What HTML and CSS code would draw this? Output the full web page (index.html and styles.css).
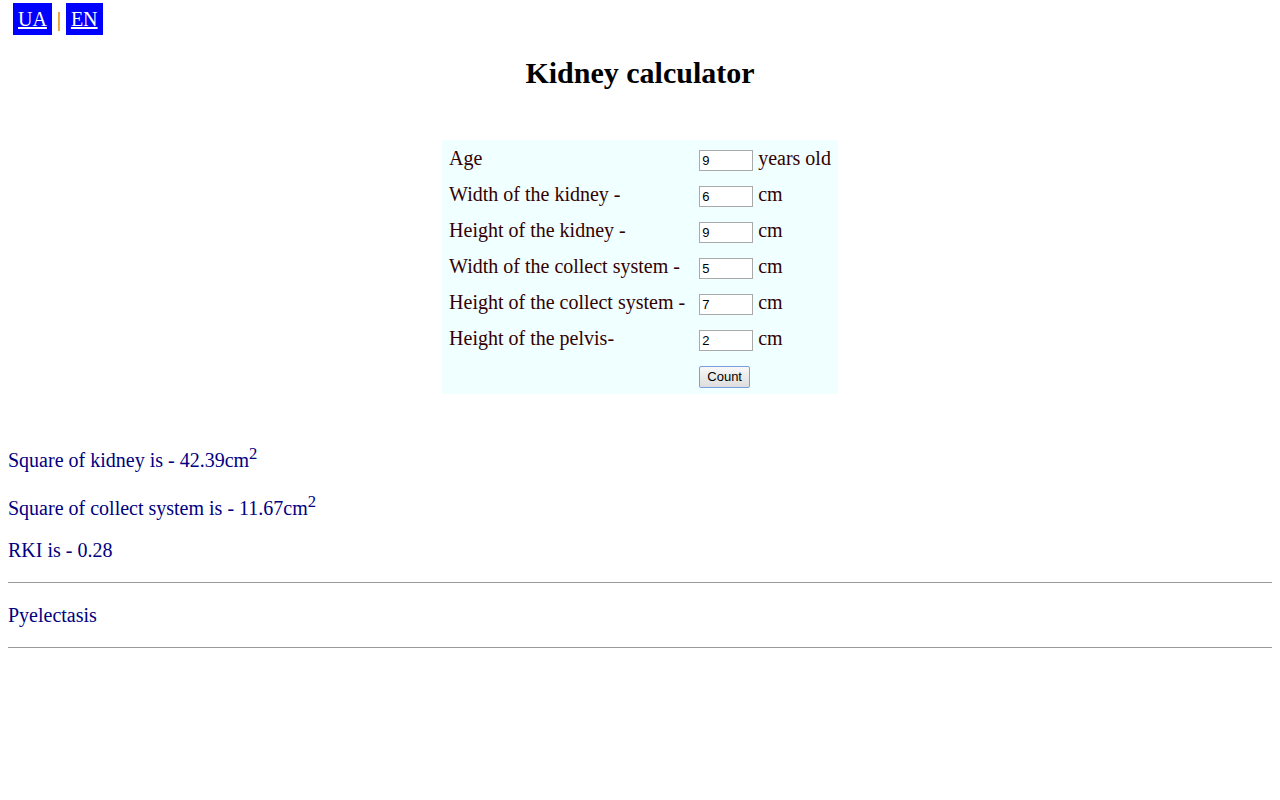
FILE: index.html
```html
<!DOCTYPE html>
<html>
<head>
<meta charset="utf-8">
<title>Kidney calculator</title>
<link rel="stylesheet" href="styles.css">
</head>
<body>
<div class="lang">
  <a class="lang-link" href="#">UA</a>
  <span class="sep">|</span>
  <a class="lang-link" href="#">EN</a>
</div>
<h1 class="title">Kidney calculator</h1>
<form class="calc">
  <table class="calc-table">
    <tr><td class="label">Age</td><td class="field"><input class="num" type="text" value="9"> years old</td></tr>
    <tr><td class="label">Width of the kidney -</td><td class="field"><input class="num" type="text" value="6"> cm</td></tr>
    <tr><td class="label">Height of the kidney -</td><td class="field"><input class="num" type="text" value="9"> cm</td></tr>
    <tr><td class="label">Width of the collect system -</td><td class="field"><input class="num" type="text" value="5"> cm</td></tr>
    <tr><td class="label">Height of the collect system -</td><td class="field"><input class="num" type="text" value="7"> cm</td></tr>
    <tr><td class="label">Height of the pelvis-</td><td class="field"><input class="num" type="text" value="2"> cm</td></tr>
    <tr><td class="label"></td><td class="field"><button class="btn" type="button">Count</button></td></tr>
  </table>
</form>
<div class="results">
  <p class="res">Square of kidney is - 42.39cm<sup>2</sup></p>
  <p class="res">Square of collect system is - 11.67cm<sup>2</sup></p>
  <p class="res">RKI is - 0.28</p>
  <hr class="rule">
  <p class="res">Pyelectasis</p>
  <hr class="rule">
</div>
</body>
</html>
```

FILE: styles.css
```css
body {
  margin: 0 8px 8px;
  font-family: "Liberation Serif", "Times New Roman", serif;
  font-size: 20px;
  background: #fff;
}
.lang {
  margin-left: 5px;
  padding-top: 3px;
  height: 32px;
  display: flex;
  align-items: center;
  gap: 5px;
}
.lang-link {
  display: block;
  background: #0000ff;
  color: #fff;
  padding: 0 5px;
  height: 32px;
  line-height: 32px;
}
.sep {
  color: #c06000;
}
.title {
  text-align: center;
  font-size: 30px;
  margin: 21px 0 50px;
}
.calc-table {
  margin: 0 auto;
  background: #f0ffff;
  border-spacing: 2px;
  color: #330000;
}
.calc-table td {
  padding: 5px 5px 3px;
  vertical-align: top;
  height: 26px;
}
.calc-table td.label {
  padding-right: 7px;
}
.field {
  white-space: nowrap;
}
.num {
  width: 48px;
  height: 17px;
  padding: 1px 2px;
  font-family: "Liberation Sans", Arial, sans-serif;
  font-size: 13px;
  border: 1px solid #a9a9a9;
  margin: 0;
  vertical-align: 0;
}
.btn {
  font-family: "Liberation Sans", Arial, sans-serif;
  font-size: 13px;
  height: 22px;
  width: 51px;
  padding: 0;
  border: 1px solid #7a9ee0;
  border-radius: 2px;
  background: linear-gradient(#f8f8f8, #dddddd);
  margin: 0;
}
.results {
  margin-top: 50px;
  color: #000080;
}
.res {
  margin: 0 0 20px;
}
.rule {
  border: 0;
  border-top: 1px solid #999;
  margin: 0 0 21px;
}
```
